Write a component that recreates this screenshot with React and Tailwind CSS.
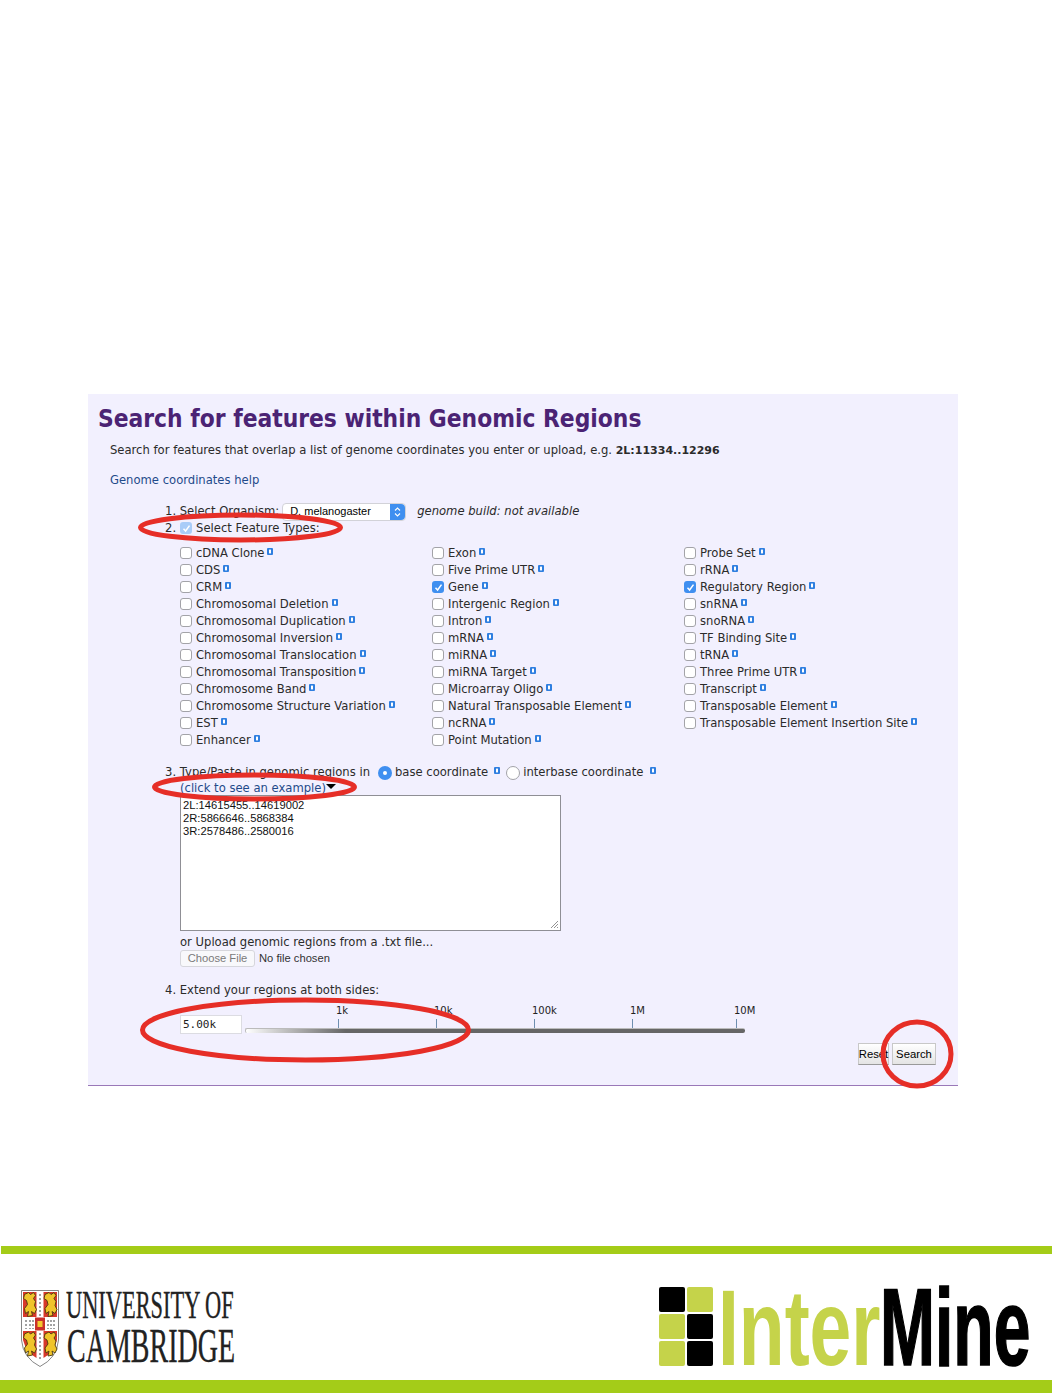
const col1 = ["cDNA Clone","CDS","CRM","Chromosomal Deletion","Chromosomal Duplication","Chromosomal Inversion","Chromosomal Translocation","Chromosomal Transposition","Chromosome Band","Chromosome Structure Variation","EST","Enhancer"];
const col2 = ["Exon","Five Prime UTR","Gene","Intergenic Region","Intron","mRNA","miRNA","miRNA Target","Microarray Oligo","Natural Transposable Element","ncRNA","Point Mutation"];
const col3 = ["Probe Set","rRNA","Regulatory Region","snRNA","snoRNA","TF Binding Site","tRNA","Three Prime UTR","Transcript","Transposable Element","Transposable Element Insertion Site"];
const checked = ["Gene", "Regulatory Region"];

function Info() {
  return (
    <svg width="6" height="7" viewBox="0 0 6 7" className="ml-[3px] mb-[5px] shrink-0">
      <rect x="0" y="0" width="6" height="7" rx="1" fill="#2f7fe0" />
      <rect x="2" y="1.6" width="2" height="3.8" fill="#fff" />
    </svg>
  );
}

function Box({ on, faded }) {
  if (on) {
    return (
      <span className={`flex w-[12px] h-[12px] mb-[1px] rounded-[3px] items-center justify-center shrink-0 ${faded ? "bg-[#a9ccf8]" : "bg-[#3f8ff0]"}`}>
        <svg width="9" height="9" viewBox="0 0 9 9"><path d="M1.5 4.8 L3.6 7 L7.5 1.6" fill="none" stroke="#fff" strokeWidth="1.5" /></svg>
      </span>
    );
  }
  return <span className="block w-[12px] h-[12px] mb-[1px] rounded-[3px] border border-[#a3a3a8] bg-white shrink-0" />;
}

function Feature({ name }) {
  return (
    <div className="flex items-center h-[17px] whitespace-nowrap">
      <Box on={checked.includes(name)} />
      <span className="ml-[4px]">{name}</span>
      <Info />
    </div>
  );
}

function Column({ items, w }) {
  return <div className={w}>{items.map((n) => <Feature key={n} name={n} />)}</div>;
}

function Tick({ label, w }) {
  return (
    <div className={`flex flex-col items-start ${w}`}>
      <span className="-ml-[2px] text-[10px] leading-[12px] text-[#222] whitespace-nowrap">{label}</span>
      <span className="block w-px h-[9px] mt-[2px] bg-[#6f8fb0]" />
    </div>
  );
}

function Lion({ x, y }) {
  return (
    <path
      transform={`translate(${x} ${y})`}
      d="M1 2 L5 0 L7 2 L10 0 L12 3 L10 6 L12 9 L11 13 L13 17 L11 21 L8 19 L9 23 L4 24 L5 19 L2 21 L1 16 L4 12 L3 8 L0 6 Z"
      fill="#f0c42a"
      stroke="#4a3a10"
      strokeWidth="0.9"
    />
  );
}

function Shield() {
  return (
    <svg width="38" height="77" viewBox="0 0 38 77" className="shrink-0">
      <path d="M0.5 0.5 H37.5 V50 Q36 68 19 76.5 Q2 68 0.5 50 Z" fill="#fff" stroke="#666" strokeWidth="0.8" />
      <path d="M2 2 H15.5 V27 H2 Z M22.5 2 H36 V27 H22.5 Z" fill="#d8382a" />
      <path d="M2 41 H15.5 V68 Q5 62 2 50 Z M22.5 41 H36 V50 Q33 62 22.5 68 Z" fill="#d8382a" />
      <Lion x="2.5" y="2.5" />
      <Lion x="23" y="2.5" />
      <g transform="translate(2.5 42)"><Lion x="0" y="0" /></g>
      <g transform="translate(23 42)"><Lion x="0" y="0" /></g>
      <rect x="14" y="27.5" width="10" height="13" fill="#c9302a" />
      <rect x="16.5" y="31" width="5" height="6" fill="#f3c92e" />
      <path d="M5 30 V39 M9 30 V39 M12 30 V39 M27 30 V39 M30 30 V39 M33 30 V39 M19 4 V26 M19 43 V71" stroke="#444" strokeWidth="1" strokeDasharray="2 2" />
    </svg>
  );
}

function Cambridge() {
  return (
    <svg width="170" height="76" viewBox="0 0 170 76" className="shrink-0 overflow-visible" fontFamily="'Liberation Serif', serif" fill="#222" stroke="#222" strokeWidth="0.2">
      <text transform="translate(-1 27.5) scale(1 1.82)" fontSize="22.4">UNIVERSITY OF</text>
      <text transform="translate(0 71.5) scale(1 1.77)" fontSize="28">CAMBRIDGE</text>
    </svg>
  );
}

function Cell({ dark }) {
  return <div className={`w-[26px] h-[25px] rounded-[2px] ${dark ? "bg-black" : "bg-[#c5d34a]"}`} />;
}

function InterMineMark() {
  return (
    <div className="grid grid-cols-2 gap-[2px] w-[54px] mt-[2px] shrink-0">
      <Cell dark /><Cell />
      <Cell /><Cell dark />
      <Cell /><Cell dark />
    </div>
  );
}

function InterMineWord() {
  return (
    <svg width="312" height="82" viewBox="0 0 312 82" className="shrink-0 overflow-visible" fontFamily="'Liberation Sans', sans-serif" fontWeight="700">
      <text transform="translate(-1 80) scale(1 1.44)" fontSize="75" fill="#c5d34a">Inter</text>
      <text transform="translate(161 80) scale(1 1.66)" fontSize="66" fill="#000" stroke="#000" strokeWidth="1">Mine</text>
    </svg>
  );
}

export default function App() {
  return (
    <div className="relative w-[1052px] h-[1393px] bg-white overflow-hidden flex flex-col font-['DejaVu_Sans',sans-serif] text-[11.6px] text-[#2b2b2b]">
      <div className="h-[394px] shrink-0" />
      <main className="ml-[88px] w-[870px] h-[692px] shrink-0 border-b border-[#9a78b8] bg-[#f2f0fe] pl-[10px] pr-[22px] pt-[10px]">
        <h1 className="text-[24.3px] leading-[30px] font-bold text-[#4b2374] whitespace-nowrap font-['DejaVu_Sans_Condensed','DejaVu_Sans',sans-serif] [font-stretch:condensed]">Search for features within Genomic Regions</h1>
        <p className="mt-[8px] ml-[12px] leading-[16px] whitespace-nowrap">Search for features that overlap a list of genome coordinates you enter or upload, e.g. <b className="text-[11px]">2L:11334..12296</b></p>
        <p className="mt-[13px] ml-[12px] leading-[16px] text-[#1f4a8a]">Genome coordinates help</p>

        <div className="ml-[67px] mt-[15px]">
          <div className="flex items-center h-[17px] whitespace-nowrap">
            <span>1. Select Organism:</span>
            <span className="relative flex items-center ml-[3px] w-[124px] h-[18px] rounded-[4px] bg-white border border-[#d2d2d8] font-['Liberation_Sans',sans-serif] text-[11px] text-black pl-[7px]">
              D. melanogaster
              <span className="absolute right-0 top-0 bottom-0 w-[15px] rounded-r-[4px] bg-[#3f8ff0] flex items-center justify-center">
                <svg width="7" height="12" viewBox="0 0 7 12"><path d="M1 4.5 L3.5 2 L6 4.5 M1 7.5 L3.5 10 L6 7.5" fill="none" stroke="#fff" strokeWidth="1.1" /></svg>
              </span>
            </span>
            <i className="ml-[11px]">genome build: not available</i>
          </div>
          <div className="flex items-center h-[17px] whitespace-nowrap">
            <span>2.</span>
            <span className="ml-[4px]"><Box on faded /></span>
            <span className="ml-[4px]">Select Feature Types:</span>
          </div>

          <div className="flex ml-[15px] mt-[8px]">
            <Column items={col1} w="w-[252px]" />
            <Column items={col2} w="w-[252px]" />
            <Column items={col3} w="w-[240px]" />
          </div>

          <div className="flex items-center h-[17px] mt-[15px] whitespace-nowrap">
            <span>3. Type/Paste in genomic regions in</span>
            <span className="flex items-center justify-center ml-[8px] w-[14px] h-[14px] rounded-full bg-[#3f8ff0]"><span className="block w-[4px] h-[4px] rounded-full bg-white" /></span>
            <span className="ml-[3px]">base coordinate</span>
            <span className="ml-[3px] flex"><Info /></span>
            <span className="ml-[6px] block w-[14px] h-[14px] rounded-full bg-white border border-[#a3a3a8]" />
            <span className="ml-[3px]">interbase coordinate</span>
            <span className="ml-[4px] flex"><Info /></span>
          </div>
          <div className="ml-[15px] h-[14px] leading-[14px] flex items-center">
            <span className="text-[#1f4a8a]">(click to see an example)</span>
            <span className="block w-0 h-0 border-l-[5px] border-r-[5px] border-t-[5px] border-l-transparent border-r-transparent border-t-black mb-[3px]" />
          </div>
          <div className="relative ml-[15px] w-[381px] h-[136px] bg-white border border-[#8f8f95] font-['Liberation_Sans',sans-serif] text-[11.2px] leading-[13px] text-[#111] pl-[2px] pt-[3px]">
            <div>2L:14615455..14619002</div>
            <div>2R:5866646..5868384</div>
            <div>3R:2578486..2580016</div>
            <svg width="9" height="9" viewBox="0 0 9 9" className="absolute right-[1px] bottom-[1px]"><path d="M8 1 L1 8 M8 4 L4 8 M8 7 L7 8" stroke="#777" strokeWidth="0.8" /></svg>
          </div>
          <p className="ml-[15px] mt-[3px] h-[16px] leading-[16px]">or Upload genomic regions from a .txt file...</p>
          <div className="ml-[15px] -mt-[1px] flex items-center h-[18px] font-['Liberation_Sans',sans-serif] text-[11.2px]">
            <span className="flex items-center justify-center w-[75px] h-[17px] rounded-[3px] border border-[#d6d6dc] bg-[#f8f8fb] text-[#7a7a7a]">Choose File</span>
            <span className="ml-[4px] text-[#333]">No file chosen</span>
          </div>

          <p className="mt-[15px] h-[16px] leading-[16px]">4. Extend your regions at both sides:</p>
          <div className="flex items-start ml-[15px] mt-[7px]">
            <span className="mt-[10px] flex items-center w-[62px] h-[19px] bg-white border border-[#dcdce2] font-['DejaVu_Sans_Mono',monospace] text-[11px] text-[#222] pl-[2px] pt-[2px]">5.00k</span>
            <div className="ml-[3px] w-[500px]">
              <div className="flex h-[23px] pl-[93px]">
                <Tick label="1k" w="w-[98px]" />
                <Tick label="10k" w="w-[98px]" />
                <Tick label="100k" w="w-[98px]" />
                <Tick label="1M" w="w-[104px]" />
                <Tick label="10M" w="w-[9px]" />
              </div>
              <div className="h-[5px] rounded-[2px] bg-gradient-to-r from-white to-[#666] to-[20%] border-t border-l border-[#bbb]" />
            </div>
          </div>
          <div className="flex justify-end gap-[3px] mt-[9px] font-['Liberation_Sans',sans-serif] text-[11.3px] text-black">
            <span className="flex items-center justify-center w-[31px] h-[22px] border border-[#c8c8c8] border-b-[#999] bg-gradient-to-b from-white to-[#e4e4e4]">Reset</span>
            <span className="flex items-center justify-center w-[44px] h-[22px] border border-[#c8c8c8] border-b-[#999] bg-gradient-to-b from-white to-[#e4e4e4]">Search</span>
          </div>
        </div>
      </main>

      <div className="h-[160px] shrink-0" />
      <div className="ml-[1px] h-[8px] shrink-0 bg-[#a4cc18]" />
      <footer className="flex items-start justify-between h-[126px] shrink-0 pl-[21px] pr-[21px] pt-[31px]">
        <div className="flex items-start gap-[8px] mt-[5px]">
          <Shield />
          <Cambridge />
        </div>
        <div className="flex items-start gap-[6px]">
          <InterMineMark />
          <InterMineWord />
        </div>
      </footer>
      <div className="h-[13px] shrink-0 bg-[#a4cc18]" />

      <svg width="1052" height="1393" viewBox="0 0 1052 1393" className="absolute left-0 top-0 pointer-events-none" fill="none" stroke="#e62e27" strokeWidth="5">
        <ellipse cx="240.5" cy="527.5" rx="100" ry="12.5" />
        <ellipse cx="254.5" cy="787" rx="100" ry="12" />
        <ellipse cx="305.5" cy="1030" rx="163" ry="30" />
        <ellipse cx="917" cy="1054" rx="34" ry="32" />
      </svg>
    </div>
  );
}
